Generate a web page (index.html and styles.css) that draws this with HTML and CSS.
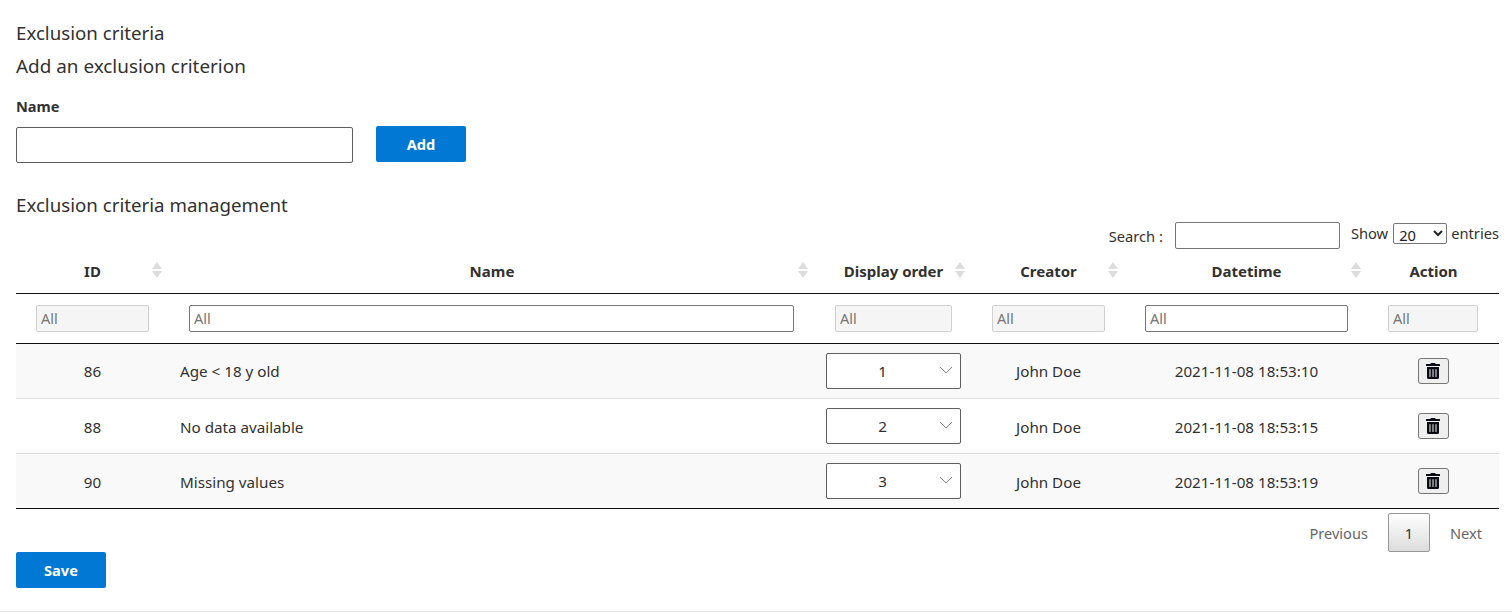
FILE: index.html
```html
<!DOCTYPE html>
<html lang="en">
<head>
<meta charset="utf-8">
<title>Exclusion criteria</title>
<link rel="stylesheet" href="styles.css">
</head>
<body>
<main class="page">
  <h1 class="title first">Exclusion criteria</h1>
  <h2 class="title second">Add an exclusion criterion</h2>
  <form class="add-form">
    <div class="field">
      <label class="label" for="name">Name</label>
      <input class="text-input" id="name" type="text">
    </div>
    <button class="btn add" type="button">Add</button>
  </form>
  <h2 class="title third">Exclusion criteria management</h2>
  <div class="tools">
    <label class="search-label" for="search">Search :</label>
    <input class="search-input" id="search" type="text">
    <span class="show">Show</span>
    <select class="entries"><option>20</option></select>
    <span class="show">entries</span>
  </div>
  <table class="grid">
    <colgroup>
      <col class="c1"><col class="c2"><col class="c3"><col class="c4"><col class="c5"><col class="c6">
    </colgroup>
    <thead>
      <tr class="head">
        <th>ID<svg class="sort" viewBox="0 0 10 16"><path d="M5 0l5 7H0zM5 16l5-7H0z"/></svg></th>
        <th>Name<svg class="sort" viewBox="0 0 10 16"><path d="M5 0l5 7H0zM5 16l5-7H0z"/></svg></th>
        <th>Display order<svg class="sort" viewBox="0 0 10 16"><path d="M5 0l5 7H0zM5 16l5-7H0z"/></svg></th>
        <th>Creator<svg class="sort" viewBox="0 0 10 16"><path d="M5 0l5 7H0zM5 16l5-7H0z"/></svg></th>
        <th>Datetime<svg class="sort" viewBox="0 0 10 16"><path d="M5 0l5 7H0zM5 16l5-7H0z"/></svg></th>
        <th>Action</th>
      </tr>
      <tr class="filters">
        <td><input class="filter off" placeholder="All" disabled></td>
        <td><input class="filter" placeholder="All"></td>
        <td><input class="filter off" placeholder="All" disabled></td>
        <td><input class="filter off" placeholder="All" disabled></td>
        <td><input class="filter" placeholder="All"></td>
        <td><input class="filter off" placeholder="All" disabled></td>
      </tr>
    </thead>
    <tbody>
      <tr class="odd">
        <td>86</td><td class="left">Age &lt; 18 y old</td>
        <td><div class="order"><select class="order-select"><option>1</option></select><svg class="chev" viewBox="0 0 14 8"><path d="M1 1l6 6 6-6"/></svg></div></td>
        <td>John Doe</td><td>2021-11-08 18:53:10</td>
        <td><button class="trash" type="button" aria-label="Delete"><svg viewBox="0 0 448 512"><path d="M32 464a48 48 0 0 0 48 48h288a48 48 0 0 0 48-48V128H32zm272-256a16 16 0 0 1 32 0v224a16 16 0 0 1-32 0zm-96 0a16 16 0 0 1 32 0v224a16 16 0 0 1-32 0zm-96 0a16 16 0 0 1 32 0v224a16 16 0 0 1-32 0zM432 32H312l-9.4-18.7A24 24 0 0 0 281.1 0H166.8a23.72 23.72 0 0 0-21.4 13.3L136 32H16A16 16 0 0 0 0 48v32a16 16 0 0 0 16 16h416a16 16 0 0 0 16-16V48a16 16 0 0 0-16-16z"/></svg></button></td>
      </tr>
      <tr>
        <td>88</td><td class="left">No data available</td>
        <td><div class="order"><select class="order-select"><option>2</option></select><svg class="chev" viewBox="0 0 14 8"><path d="M1 1l6 6 6-6"/></svg></div></td>
        <td>John Doe</td><td>2021-11-08 18:53:15</td>
        <td><button class="trash" type="button" aria-label="Delete"><svg viewBox="0 0 448 512"><path d="M32 464a48 48 0 0 0 48 48h288a48 48 0 0 0 48-48V128H32zm272-256a16 16 0 0 1 32 0v224a16 16 0 0 1-32 0zm-96 0a16 16 0 0 1 32 0v224a16 16 0 0 1-32 0zm-96 0a16 16 0 0 1 32 0v224a16 16 0 0 1-32 0zM432 32H312l-9.4-18.7A24 24 0 0 0 281.1 0H166.8a23.72 23.72 0 0 0-21.4 13.3L136 32H16A16 16 0 0 0 0 48v32a16 16 0 0 0 16 16h416a16 16 0 0 0 16-16V48a16 16 0 0 0-16-16z"/></svg></button></td>
      </tr>
      <tr class="odd">
        <td>90</td><td class="left">Missing values</td>
        <td><div class="order"><select class="order-select"><option>3</option></select><svg class="chev" viewBox="0 0 14 8"><path d="M1 1l6 6 6-6"/></svg></div></td>
        <td>John Doe</td><td>2021-11-08 18:53:19</td>
        <td><button class="trash" type="button" aria-label="Delete"><svg viewBox="0 0 448 512"><path d="M32 464a48 48 0 0 0 48 48h288a48 48 0 0 0 48-48V128H32zm272-256a16 16 0 0 1 32 0v224a16 16 0 0 1-32 0zm-96 0a16 16 0 0 1 32 0v224a16 16 0 0 1-32 0zm-96 0a16 16 0 0 1 32 0v224a16 16 0 0 1-32 0zM432 32H312l-9.4-18.7A24 24 0 0 0 281.1 0H166.8a23.72 23.72 0 0 0-21.4 13.3L136 32H16A16 16 0 0 0 0 48v32a16 16 0 0 0 16 16h416a16 16 0 0 0 16-16V48a16 16 0 0 0-16-16z"/></svg></button></td>
      </tr>
    </tbody>
  </table>
  <nav class="pager">
    <span class="pg">Previous</span>
    <span class="pg current">1</span>
    <span class="pg">Next</span>
  </nav>
  <button class="btn save" type="button">Save</button>
</main>
<footer class="foot"></footer>
</body>
</html>
```
FILE: styles.css
```css
* { box-sizing: border-box; }
html, body { margin: 0; padding: 0; }
body {
  font-family: "Noto Sans", "Open Sans", sans-serif;
  font-size: 15.2px;
  color: #323130;
  background: #fff;
  height: 612px;
  overflow: hidden;
  display: flex;
  flex-direction: column;
}
.page { padding: 0 13px 0 16px; height: 611px; }
.title { margin: 0; font-weight: 400; font-size: 18.7px; line-height: 26px; }
.first { padding-top: 20px; }
.second { margin-top: 7px; font-size: 18.9px; }
.add-form { display: flex; align-items: flex-end; gap: 23px; margin-top: 17px; }
.field { display: flex; flex-direction: column; }
.label { font-weight: 700; font-size: 14.6px; line-height: 20px; margin-bottom: 11px; }
.text-input {
  width: 337px; height: 36px; border: 1px solid #605e5c; border-radius: 2px;
  background: #fff; padding: 0 8px;
}
.btn {
  width: 90px; height: 36px; border: 0; border-radius: 2px; background: #0078d4;
  color: #fff; font: 700 14.6px "Noto Sans", sans-serif; padding: 0;
}
.add { margin-bottom: 1px; }
.third { margin-top: 29px; }
.tools {
  display: flex; justify-content: flex-end; align-items: flex-start;
  margin-top: 4px; height: 27px; font-size: 14.7px;
}
.search-label { margin-right: 12px; line-height: 20px; margin-top: 4px; }
.search-input { width: 165px; height: 27px; border: 1px solid #767676; border-radius: 2px; background: #fff; margin-right: 11px; }
.show { line-height: 20px; margin-top: 1px; }
.entries {
  width: 54px; height: 21px; margin: 1px 4px 0 5px; padding: 0 0 2px 1px;
  border: 1px solid #767676; border-radius: 2px; background: #fff;
  font: 14.7px/17px "Noto Sans", sans-serif; color: #222;
}
.grid {
  width: 1483px; table-layout: fixed; border-collapse: separate; border-spacing: 0;
}
.c1 { width: 153px; } .c2 { width: 646px; } .c3 { width: 157px; }
.c4 { width: 153px; } .c5 { width: 243px; } .c6 { width: 131px; }
.head th {
  position: relative; height: 45px; padding: 0 0 1px; font-size: 15px; font-weight: 700;
  text-align: center; border-bottom: 1px solid #111; vertical-align: middle;
}
.sort { position: absolute; right: 7px; top: 13px; width: 10px; height: 16px; fill: #dcdcdc; }
.filters td { height: 50px; padding: 0 20px; border-bottom: 1px solid #111; }
.filters td:nth-child(2), .filters td:last-child { padding-right: 21px; }
.filter {
  display: block; width: 100%; height: 27px; padding: 0 4px 2px; border: 1px solid #767676;
  border-radius: 2px; background: #fff; font: 14.5px "Noto Sans", sans-serif;
}
.filter::placeholder { color: #767676; opacity: 1; }
.filter.off { background: #f5f5f5; border-color: #d0d0d0; }
tbody td {
  height: 55px; text-align: center; vertical-align: middle; padding: 0;
  border-bottom: 1px solid #ddd; font-size: 15.2px;
}
tbody tr + tr td:not(:nth-child(3)):not(:last-child) { padding-top: 2px; }
tbody tr:last-child td { border-bottom: 1px solid #111; }
tbody .left { text-align: left; padding-left: 11px; }
.odd td { background: #f9f9f9; }
.order { position: relative; width: 135px; height: 36px; margin: -1px 0 0 11px; }
.order-select {
  appearance: none; width: 100%; height: 100%; padding: 0 22px 0 0; background: #fff;
  border: 1px solid #605e5c; border-radius: 2px; text-align: center;
  font: 15.2px "Noto Sans", sans-serif; color: #323130;
}
.chev { position: absolute; right: 8px; top: 13px; width: 14px; height: 8px; fill: none; stroke: #8a8886; stroke-width: 1; pointer-events: none; }
.trash {
  width: 31px; height: 26px; padding: 0; margin: -1px 0 0 -1px; border: 1px solid #767676; border-radius: 3px;
  background: #efefef; display: inline-flex; align-items: center; justify-content: center;
}
.trash svg { width: 14px; height: 16px; fill: #0a0a14; }
.pager {
  display: flex; justify-content: flex-end; align-items: center; margin-top: 4px; height: 39px;
  padding-right: 17px; font-size: 14.6px;
}
.pg { color: #666; padding: 0 20px; line-height: 20px; }
.pg:last-child { padding-right: 0; }
.current {
  width: 42px; height: 39px; padding: 0; margin: 0; display: flex; align-items: center; justify-content: center;
  border: 1px solid #979797; border-radius: 2px; color: #333;
  background: linear-gradient(to bottom, #fff 0%, #dcdcdc 100%);
}
.save { display: block; margin-top: 0; }
.foot { height: 1px; background: #edebe9; }
```
